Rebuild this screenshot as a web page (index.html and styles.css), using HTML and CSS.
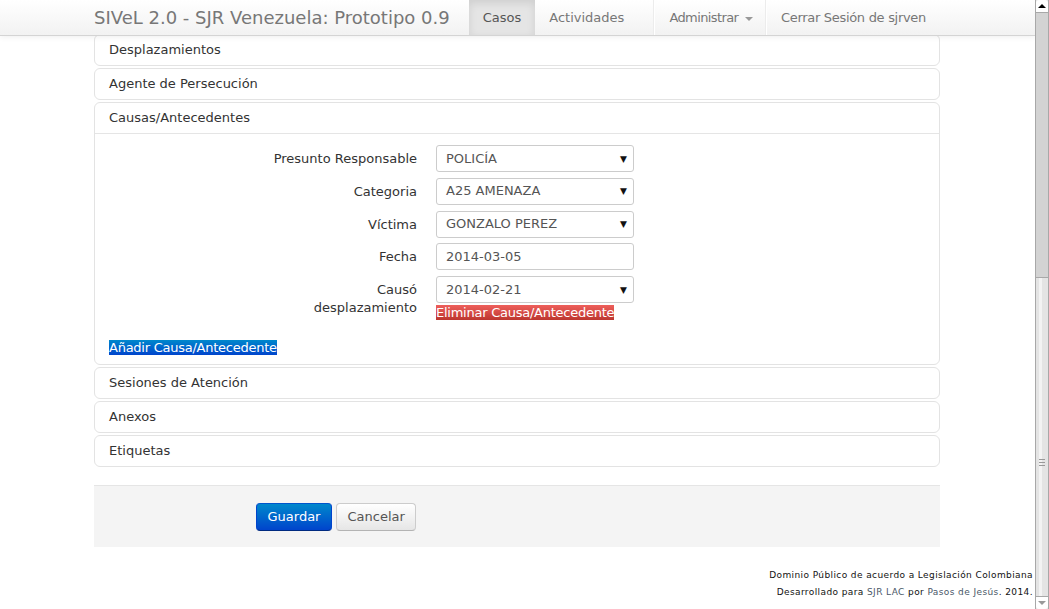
FILE: index.html
```html
<!DOCTYPE html>
<html lang="es">
<head>
<meta charset="utf-8">
<title>SIVeL 2.0 - SJR Venezuela</title>
<link rel="stylesheet" href="styles.css">
</head>
<body>
<div class="screen">
  <div class="viewport">
    <header class="navbar">
      <div class="nav-inner">
        <span class="brand">SIVeL 2.0 - SJR Venezuela: Prototipo 0.9</span>
        <ul class="nav">
          <li class="active"><a>Casos</a></li>
          <li><a>Actividades</a></li>
        </ul>
        <ul class="nav nav-right">
          <li class="divider"></li>
          <li class="dropdown"><a>Administrar <b class="caret"></b></a></li>
          <li class="divider"></li>
          <li><a>Cerrar Sesión de sjrven</a></li>
        </ul>
      </div>
    </header>

    <main class="container">
      <div class="accordion">
        <div class="group"><div class="heading">Desplazamientos</div></div>
        <div class="group"><div class="heading">Agente de Persecución</div></div>
        <div class="group">
          <div class="heading">Causas/Antecedentes</div>
          <div class="body">
            <div class="row">
              <label class="label">Presunto Responsable</label>
              <div class="controls"><div class="select"><span>POLICÍA</span><i class="arrow">▼</i></div></div>
            </div>
            <div class="row">
              <label class="label">Categoria</label>
              <div class="controls"><div class="select"><span>A25 AMENAZA</span><i class="arrow">▼</i></div></div>
            </div>
            <div class="row">
              <label class="label">Víctima</label>
              <div class="controls"><div class="select"><span>GONZALO PEREZ</span><i class="arrow">▼</i></div></div>
            </div>
            <div class="row">
              <label class="label">Fecha</label>
              <div class="controls"><input class="select" value="2014-03-05"></div>
            </div>
            <div class="row last">
              <label class="label">Causó desplazamiento</label>
              <div class="controls">
                <div class="select"><span>2014-02-21</span><i class="arrow">▼</i></div>
                <div class="link-line"><a class="danger-link">Eliminar Causa/Antecedente</a></div>
              </div>
            </div>
            <div class="add-line"><a class="primary-link">Añadir Causa/Antecedente</a></div>
          </div>
        </div>
        <div class="group"><div class="heading">Sesiones de Atención</div></div>
        <div class="group"><div class="heading">Anexos</div></div>
        <div class="group"><div class="heading">Etiquetas</div></div>
      </div>

      <div class="form-actions">
        <button class="btn btn-primary">Guardar</button>
        <button class="btn btn-default">Cancelar</button>
      </div>
    </main>

    <footer class="footer">
      <div>Dominio Público de acuerdo a Legislación Colombiana</div>
      <div>Desarrollado para <a>SJR LAC</a> por <a>Pasos de Jesús</a>. 2014.</div>
    </footer>
  </div>

  <div class="scrollbar">
    <div class="sb-btn sb-up"><i class="tri-up"></i></div>
    <div class="sb-thumb"></div>
    <div class="sb-track"><div class="grip"><span></span><span></span><span></span></div></div>
    <div class="sb-btn sb-down"><i class="tri-down"></i></div>
  </div>
</div>
</body>
</html>
```

FILE: styles.css
```css
html, body {
  margin: 0;
  padding: 0;
}
body {
  font-family: "DejaVu Sans", "Noto Sans", sans-serif;
  font-size: 13px;
  line-height: 18px;
  color: #333;
  background: #fff;
  overflow: hidden;
}
.screen {
  display: flex;
  height: 609px;
}
.viewport {
  flex: 1;
  position: relative;
  overflow: hidden;
}

/* navbar */
.navbar {
  position: absolute;
  top: 0;
  left: 0;
  right: 0;
  height: 35px;
  border-bottom: 1px solid #d4d4d4;
  background: linear-gradient(#ffffff, #f2f2f2);
  box-shadow: 0 1px 6px rgba(0, 0, 0, 0.07);
  z-index: 2;
}
.nav-inner {
  width: 846px;
  margin-left: 94px;
  display: flex;
  height: 35px;
}
.brand {
  font-size: 18px;
  color: #777;
  line-height: 35px;
  margin-right: 19px;
  white-space: nowrap;
}
.nav {
  list-style: none;
  margin: 0;
  padding: 0;
  display: flex;
}
.nav li a {
  display: block;
  padding: 0 14px;
  line-height: 35px;
  color: #777;
  white-space: nowrap;
}
.nav li.active a {
  background: #e5e5e5;
  color: #555;
  box-shadow: inset 0 3px 8px rgba(0, 0, 0, 0.1);
}
.nav-right {
  margin-left: auto;
  letter-spacing: -0.3px;
}
.nav-right li.dropdown a {
  padding: 0 12px 0 14px;
  letter-spacing: -0.6px;
}
.nav li.divider {
  width: 0;
  border-left: 1px solid #ececec;
  border-right: 1px solid #fff;
}
.caret {
  display: inline-block;
  width: 0;
  height: 0;
  border-top: 4px solid #999;
  border-left: 4px solid transparent;
  border-right: 4px solid transparent;
  vertical-align: middle;
  margin-left: 3px;
}

/* content */
.container {
  width: 846px;
  margin: 34px 0 0 94px;
}
.group {
  border: 1px solid #e3e3e3;
  border-radius: 6px;
  margin-bottom: 2px;
}
.heading {
  padding: 6px 14px;
  line-height: 18px;
  color: #333;
}
.body {
  border-top: 1px solid #e5e5e5;
  padding: 11px 14px 7.5px;
}
.row {
  display: flex;
  gap: 19px;
  margin-left: 163px;
  margin-bottom: 5.75px;
}
.row.last {
  margin-bottom: 0;
}
.label {
  width: 145px;
  text-align: right;
  padding-top: 5px;
  color: #333;
}
.controls {
  width: 198px;
}
.select {
  width: 198px;
  height: 27px;
  box-sizing: border-box;
  border: 1px solid #ccc;
  border-radius: 3px;
  padding: 0 6px 0 9px;
  display: flex;
  align-items: center;
  color: #555;
  background: #fff;
  font-family: inherit;
  font-size: 13px;
  margin: 0;
}
.arrow {
  margin-left: auto;
  font-size: 9px;
  font-style: normal;
  color: #111;
}
.link-line {
  margin-top: 1px;
  line-height: 18px;
  white-space: nowrap;
}
.danger-link {
  color: #fff;
  letter-spacing: -0.25px;
  background: linear-gradient(#ee5f5b, #bd362f);
}
.add-line {
  margin-top: 16.5px;
  line-height: 18px;
}
.primary-link {
  color: #fff;
  letter-spacing: -0.25px;
  background: linear-gradient(#0088cc, #0044cc);
}

.form-actions {
  margin-top: 18px;
  border-top: 1px solid #e5e5e5;
  background: #f4f4f4;
  padding: 17px 0 16px 162px;
  display: flex;
  gap: 4px;
}
.btn {
  height: 28px;
  box-sizing: border-box;
  padding: 0 10.5px;
  border-radius: 4px;
  font-family: inherit;
  font-size: 13px;
  line-height: 26px;
  border: 1px solid;
}
.btn-primary {
  background: linear-gradient(#0088cc, #0044cc);
  border-color: #0055cc #0044cc #002a80;
  color: #fff;
}
.btn-default {
  background: linear-gradient(#ffffff, #e6e6e6);
  border-color: #ccc #ccc #b3b3b3;
  color: #555;
}

.footer {
  margin-top: 20px;
  padding-right: 2px;
  text-align: right;
  font-size: 9px;
  letter-spacing: 0.4px;
  line-height: 17px;
  color: #111;
}
.footer a {
  color: #4a5868;
}

/* scrollbar */
.scrollbar {
  width: 14px;
  box-sizing: border-box;
  display: flex;
  flex-direction: column;
  border-left: 1px solid #a8a8a8;
  border-right: 1px solid #a8a8a8;
  background: #e6e6e6;
}
.sb-btn {
  height: 12px;
  background: #fff;
  display: flex;
  align-items: center;
  justify-content: center;
}
.sb-up {
  border-radius: 3px 3px 0 0;
  border-bottom: 1px solid #a8a8a8;
}
.sb-down {
  border-radius: 0 0 3px 3px;
  border-top: 1px solid #a8a8a8;
}
.tri-up {
  width: 0;
  height: 0;
  border-bottom: 4px solid #000;
  border-left: 4px solid transparent;
  border-right: 4px solid transparent;
}
.tri-down {
  width: 0;
  height: 0;
  border-top: 4px solid #999;
  border-left: 4px solid transparent;
  border-right: 4px solid transparent;
}
.sb-thumb {
  height: 264px;
  background: #d3d3d3;
  border-bottom: 1px solid #a8a8a8;
}
.sb-track {
  flex: 1;
  background: linear-gradient(90deg, #e4e4e4 0 3px, #f3f3f3 3px 6px, #e4e4e4 6px);
  padding-top: 181px;
  box-sizing: border-box;
}
.grip {
  display: flex;
  flex-direction: column;
  align-items: center;
  gap: 2px;
}
.grip span {
  display: block;
  width: 6px;
  height: 1px;
  background: #999;
}
```
